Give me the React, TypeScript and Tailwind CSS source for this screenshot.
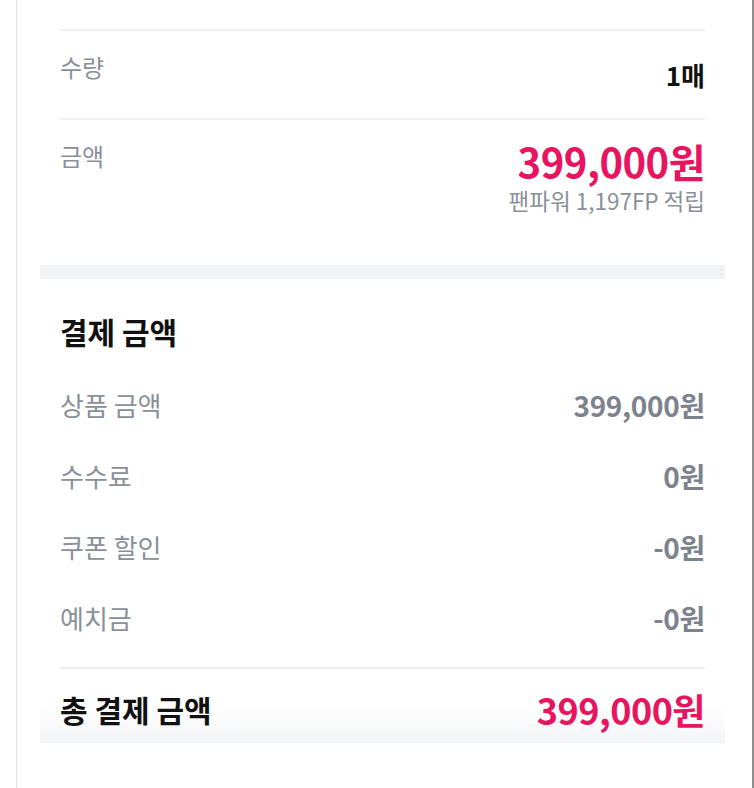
import React from "react";

const font = { fontFamily: '"Noto Sans CJK KR", "Noto Sans", sans-serif' };

function Row({ label, value }: { label: string; value: string }) {
  return (
    <div className="flex items-center justify-between h-[71px]">
      <span className="text-[26px] text-[#8a9099]">{label}</span>
      <span className="text-[28px] font-bold text-[#7d838c] tracking-[-0.3px]">{value}</span>
    </div>
  );
}

export default function App() {
  return (
    <div className="w-[754px] h-[788px] bg-white flex overflow-hidden" style={font}>
      <div className="w-[16px] shrink-0" />
      <div className="flex-1 border-l border-l-[#e2e2e2] border-r-2 border-r-[#8e8e8e] pl-[23px] pr-[27px]">
        <div className="px-[20px]">
          <div className="h-[29px]" />
          <div className="h-[2px] bg-[#eef0f2]" />
          <div className="flex justify-between items-start h-[87px] pt-[20px]">
            <span className="text-[24px] leading-[32px] text-[#8a9099]">수량</span>
            <span className="text-[26px] leading-[32px] font-bold text-[#111] mt-[8px]">1매</span>
          </div>
          <div className="h-[2px] bg-[#eef0f2]" />
          <div className="flex justify-between items-start pt-[18px] h-[145px]">
            <span className="text-[24px] leading-[32px] text-[#8a9099] mt-[2px]">금액</span>
            <div className="flex flex-col items-end">
              <span className="text-[40px] leading-[46px] font-bold text-[#e8145f] tracking-[-0.5px]">399,000원</span>
              <span className="text-[22.5px] leading-[28px] text-[#8a9099] mt-[2px]">팬파워 1,197FP 적립</span>
            </div>
          </div>
        </div>
        <div className="h-[14px] bg-[#f1f2f4]" />
        <div className="px-[20px]">
          <div className="h-[32px]" />
          <div className="text-[30px] leading-[40px] font-bold text-[#111]">결제 금액</div>
          <div className="h-[18px]" />
          <Row label="상품 금액" value="399,000원" />
          <Row label="수수료" value="0원" />
          <Row label="쿠폰 할인" value="-0원" />
          <Row label="예치금" value="-0원" />
          <div className="h-[14px]" />
          <div className="h-[2px] bg-[#eef0f2]" />
        </div>
        <div className="bg-gradient-to-b from-white via-white to-[#f3f4f5] px-[20px]">
          <div className="flex items-center justify-between h-[74px] pt-[6px]">
            <span className="text-[30px] font-bold text-[#111]">총 결제 금액</span>
            <span className="text-[36px] font-bold text-[#e8145f] tracking-[-0.5px]">399,000원</span>
          </div>
        </div>
      </div>
    </div>
  );
}
